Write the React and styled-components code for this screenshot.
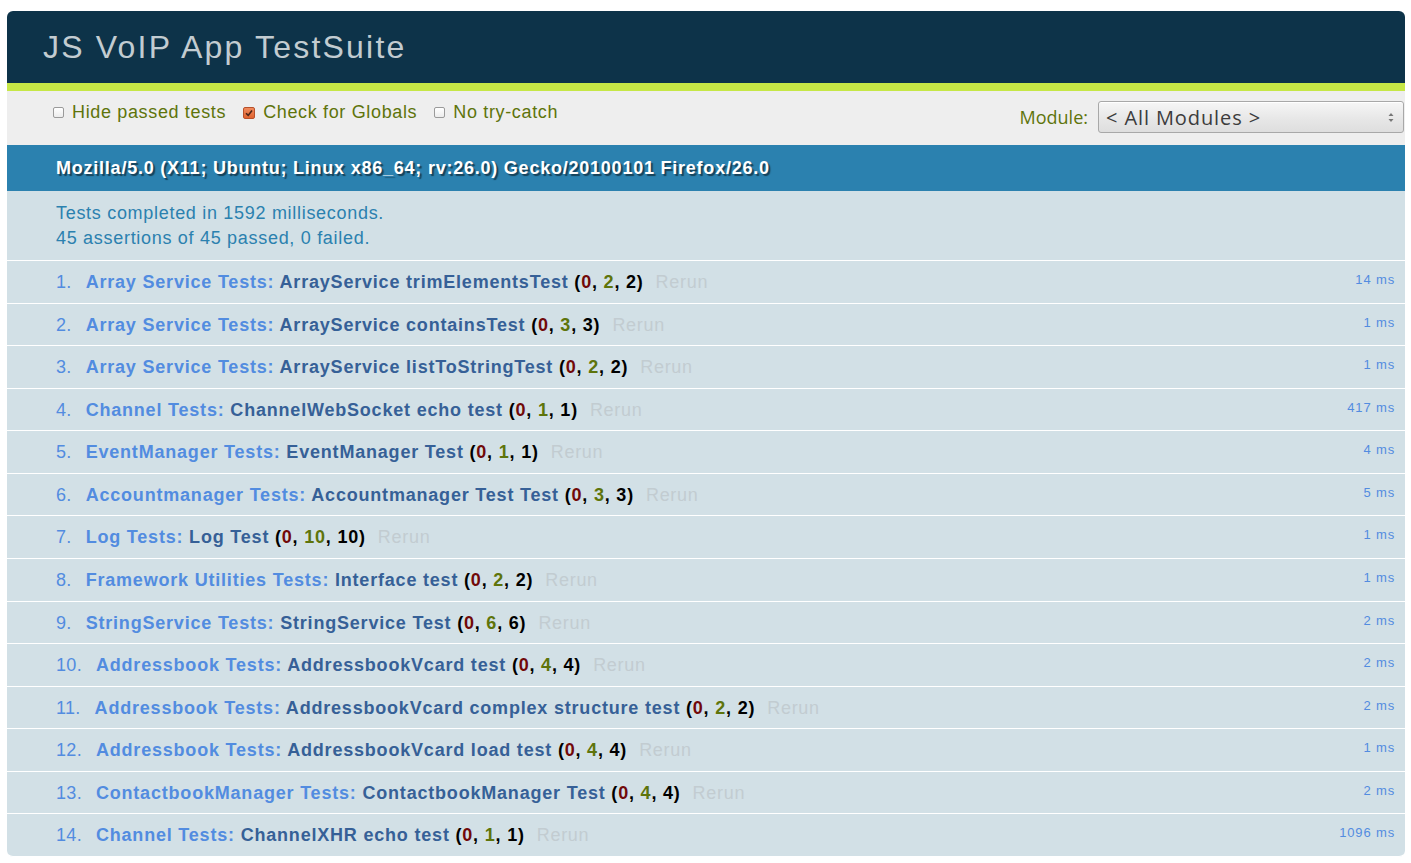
import React from "react";
import styled, { createGlobalStyle } from "styled-components";

const GlobalStyle = createGlobalStyle`
  html, body {
    background: #fff;
  }
  body {
    margin: 11px 6px 0 7px;
    font-family: "Liberation Sans", Arial, Helvetica, sans-serif;
  }
`;

const Header = styled.h1`
  margin: 0;
  height: 72px;
  display: flex;
  align-items: center;
  padding-left: 36px;
  background-color: #0d3349;
  color: #c2ccd1;
  font-size: 32px;
  font-weight: normal;
  letter-spacing: 2.2px;
  line-height: 1;
  border-radius: 6px 6px 0 0;
`;

const Banner = styled.div`
  height: 8px;
  background-color: #c6e746;
`;

const Toolbar = styled.div`
  height: 54px;
  box-sizing: border-box;
  display: flex;
  align-items: flex-start;
  justify-content: space-between;
  padding: 9px 1px 0 46px;
  background-color: #eee;
  color: #5e740b;
  font-size: 18px;
`;

const Options = styled.div`
  display: flex;
  align-items: center;
  gap: 17px;
  height: 24px;
  letter-spacing: 0.65px;
`;

const Option = styled.label`
  display: flex;
  align-items: center;
  gap: 8px;
`;

const Box = styled.span`
  width: ${(p) => (p.$checked ? 12 : 11)}px;
  height: ${(p) => (p.$checked ? 12 : 11)}px;
  box-sizing: border-box;
  border-radius: 2px;
  border: 1px solid ${(p) => (p.$checked ? "#b8502a" : "#9a9a9a")};
  background: ${(p) =>
    p.$checked
      ? "linear-gradient(#f08a5d, #e0632f)"
      : "linear-gradient(#ffffff, #ececec)"};
  display: flex;
  align-items: center;
  justify-content: center;
  margin-top: 1px;
`;

const ModuleFilter = styled.div`
  display: flex;
  align-items: center;
  gap: 10px;
  padding-top: 1px;
  font-family: "Open Sans", "Noto Sans", sans-serif;
  font-size: 18px;
`;

const SelectBox = styled.div`
  position: relative;
  width: 306px;
  height: 32px;
  box-sizing: border-box;
  border: 1px solid #a8a8a8;
  border-radius: 3px;
  background: linear-gradient(#f6f6f6, #e6e6e6 60%, #dedede);
  box-shadow: inset 0 1px 0 #fff;
  display: flex;
  align-items: center;
  padding-left: 7px;
  color: #3c3c3c;
  font-size: 20px;
  letter-spacing: 0.9px;
  font-family: "Open Sans", "Noto Sans", sans-serif;
`;

const Arrows = styled.svg`
  position: absolute;
  right: 9px;
  top: 10px;
`;

const UserAgent = styled.h2`
  margin: 0;
  height: 46px;
  box-sizing: border-box;
  display: flex;
  align-items: center;
  padding-left: 49px;
  background-color: #2b81af;
  color: #fff;
  font-size: 18px;
  font-weight: bold;
  letter-spacing: 0.77px;
  text-shadow: rgba(0, 0, 0, 0.5) 2px 2px 1px;
`;

const TestResult = styled.p`
  margin: 0;
  padding: 10px 10px 9px 49px;
  background-color: #d2e0e6;
  color: #2b81af;
  font-size: 18px;
  line-height: 25px;
  letter-spacing: 0.7px;
  border-bottom: 1px solid #fff;
`;

const TestList = styled.ol`
  margin: 0;
  padding: 0;
  list-style: none;
`;

const Row = styled.li`
  padding: 11px 10px 9px 49px;
  line-height: 21.57px;
  font-size: 18px;
  letter-spacing: 0.7px;
  background-color: #d2e0e6;
  color: #528ce0;
  border-bottom: 1px solid #fff;

  &:last-child {
    border-radius: 0 0 6px 6px;
  }
`;

const Num = styled.span`
  display: inline-block;
  margin-right: 14px;
  letter-spacing: 0.3px;
`;

const Title = styled.strong`
  font-weight: bold;
  letter-spacing: 0.8px;
`;

const TestName = styled.span`
  color: #366097;
`;

const Count = styled.b`
  color: ${(p) => p.$color};
`;

const Rerun = styled.a`
  margin-left: 12px;
  color: #c2ccd1;
  text-decoration: none;
`;

const Runtime = styled.span`
  float: right;
  font-size: 13px;
  line-height: 15px;
  letter-spacing: 0.85px;
  color: #528ce0;
`;

const tests = [
  ["Array Service Tests", "ArrayService trimElementsTest", 2, 14],
  ["Array Service Tests", "ArrayService containsTest", 3, 1],
  ["Array Service Tests", "ArrayService listToStringTest", 2, 1],
  ["Channel Tests", "ChannelWebSocket echo test", 1, 417],
  ["EventManager Tests", "EventManager Test", 1, 4],
  ["Accountmanager Tests", "Accountmanager Test Test", 3, 5],
  ["Log Tests", "Log Test", 10, 1],
  ["Framework Utilities Tests", "Interface test", 2, 1],
  ["StringService Tests", "StringService Test", 6, 2],
  ["Addressbook Tests", "AddressbookVcard test", 4, 2],
  ["Addressbook Tests", "AddressbookVcard complex structure test", 2, 2],
  ["Addressbook Tests", "AddressbookVcard load test", 4, 1],
  ["ContactbookManager Tests", "ContactbookManager Test", 4, 2],
  ["Channel Tests", "ChannelXHR echo test", 1, 1096],
];

function Checkbox({ checked }) {
  return (
    <Box $checked={checked}>
      {checked && (
        <svg width="8" height="8" viewBox="0 0 8 8">
          <path d="M1 4.2 L3.2 6.4 L7 1.4" fill="none" stroke="#4a2418" strokeWidth="1.6" />
        </svg>
      )}
    </Box>
  );
}

export default function App() {
  return (
    <>
      <GlobalStyle />
      <Header>JS VoIP App TestSuite</Header>
      <Banner />
      <Toolbar>
        <Options>
          <Option>
            <Checkbox />
            Hide passed tests
          </Option>
          <Option>
            <Checkbox checked />
            Check for Globals
          </Option>
          <Option>
            <Checkbox />
            No try-catch
          </Option>
        </Options>
        <ModuleFilter>
          <span>Module:</span>
          <SelectBox>
            {"< All Modules >"}
            <Arrows width="6" height="11" viewBox="0 0 6 11">
              <path d="M3 1 L5.5 4 L0.5 4 Z" fill="#777" />
              <path d="M3 10 L5.5 7 L0.5 7 Z" fill="#777" />
            </Arrows>
          </SelectBox>
        </ModuleFilter>
      </Toolbar>
      <UserAgent>Mozilla/5.0 (X11; Ubuntu; Linux x86_64; rv:26.0) Gecko/20100101 Firefox/26.0</UserAgent>
      <TestResult>
        Tests completed in 1592 milliseconds.
        <br />
        45 assertions of 45 passed, 0 failed.
      </TestResult>
      <TestList>
        {tests.map(([mod, name, n, ms], i) => (
          <Row key={i}>
            <Runtime>{ms} ms</Runtime>
            <Num>{i + 1}.</Num>
            <Title>
              {mod}: <TestName>{name}</TestName>{" "}
              <Count $color="#000">
                (<Count $color="#710909">0</Count>, <Count $color="#5e740b">{n}</Count>, {n})
              </Count>
            </Title>
            <Rerun href="#">Rerun</Rerun>
          </Row>
        ))}
      </TestList>
    </>
  );
}
